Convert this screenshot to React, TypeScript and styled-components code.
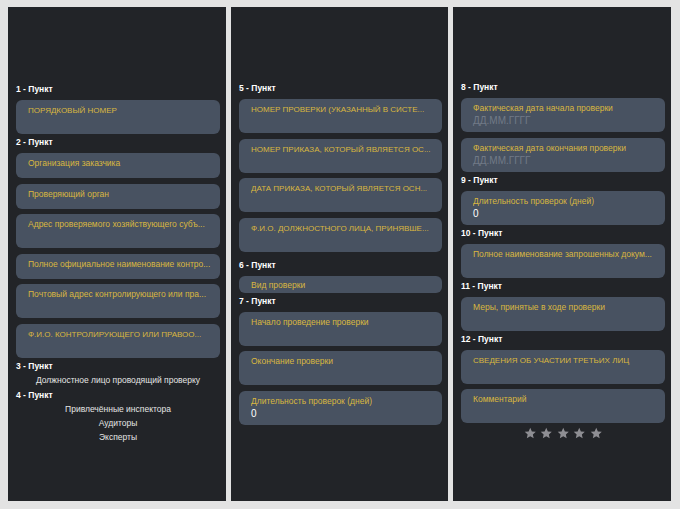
import React from "react";
import styled, { createGlobalStyle } from "styled-components";

const GlobalStyle = createGlobalStyle`
  html, body {
    margin: 0;
    padding: 0;
    background: #e3e3e3;
  }
  body {
    font-family: "Liberation Sans", Arial, sans-serif;
  }
`;

type FieldSize = "tall" | "short" | "compact";

type Block =
  | { kind: "fields"; title: string; spaced?: boolean; fields: FieldData[] }
  | { kind: "lines"; title: string; lines: string[] }
  | { kind: "stars" };

interface FieldData {
  label: string;
  size?: FieldSize;
  value?: string;
  placeholder?: string;
}

interface ScreenData {
  width: number;
  top: number;
  blocks: Block[];
}

const heights: Record<FieldSize, number> = {
  tall: 34,
  short: 25,
  compact: 17,
};

const Screens = styled.div`
  display: flex;
  gap: 5px;
  padding: 7px 9px 8px 8px;
  height: 509px;
  box-sizing: border-box;
`;

const Screen = styled.section<{ $width: number; $top: number }>`
  width: ${(p) => p.$width}px;
  height: 494px;
  flex: none;
  box-sizing: border-box;
  padding: ${(p) => p.$top}px 6px 0 8px;
  background: #222428;
  display: flex;
  flex-direction: column;
  overflow: hidden;
`;

const Heading = styled.div<{ $spaced?: boolean }>`
  margin-top: ${(p) => (p.$spaced ? 5 : 0)}px;
  padding-top: 1px;
  font-size: 8.5px;
  line-height: 14px;
  font-weight: 700;
  color: #ffffff;
`;

const FieldGroup = styled.div`
  display: flex;
  flex-direction: column;
  gap: 5.5px;
  padding-top: 4px;
`;

const Field = styled.div<{ $size: FieldSize }>`
  height: ${(p) => heights[p.$size]}px;
  box-sizing: border-box;
  padding: ${(p) => (p.$size === "compact" ? 3 : 4)}px 6px 0 12px;
  border-radius: 6px;
  background: #485261;
  overflow: hidden;
`;

// capitals run wider than lowercase in this face, so they get a smaller size
const FieldLabel = styled.div<{ $caps: boolean }>`
  font-size: ${(p) => (p.$caps ? 8 : 8.5)}px;
  line-height: 13px;
  color: #d9b740;
  white-space: nowrap;
  overflow: hidden;
`;

const FieldValue = styled.div<{ $muted?: boolean }>`
  font-size: 10px;
  line-height: 11px;
  color: ${(p) => (p.$muted ? "#717a87" : "#ffffff")};
`;

const Line = styled.div`
  font-size: 8.5px;
  line-height: 14px;
  color: #e4e4e4;
  text-align: center;
`;

const StarRow = styled.div`
  display: flex;
  justify-content: center;
  gap: 4px;
  padding-top: 4px;
`;

const StarIcon = () => (
  <svg width="12.5" height="12.5" viewBox="0 0 24 24">
    <polygon
      fill="#8e8e93"
      points="12,1.5 15.1,8.4 22.6,9.2 17,14.3 18.6,21.7 12,17.9 5.4,21.7 7,14.3 1.4,9.2 8.9,8.4"
    />
  </svg>
);

const screens: ScreenData[] = [
  {
    width: 218,
    top: 74,
    blocks: [
      {
        kind: "fields",
        title: "1 - Пункт",
        fields: [{ label: "ПОРЯДКОВЫЙ НОМЕР", size: "tall" }],
      },
      {
        kind: "fields",
        title: "2 - Пункт",
        fields: [
          { label: "Организация заказчика", size: "short" },
          { label: "Проверяющий орган", size: "short" },
          { label: "Адрес проверяемого хозяйствующего субъ...", size: "tall" },
          { label: "Полное официальное наименование контро...", size: "short" },
          { label: "Почтовый адрес контролирующего или пра...", size: "tall" },
          { label: "Ф.И.О. КОНТРОЛИРУЮЩЕГО ИЛИ ПРАВОО...", size: "tall" },
        ],
      },
      {
        kind: "lines",
        title: "3 - Пункт",
        lines: ["Должностное лицо проводящий проверку"],
      },
      {
        kind: "lines",
        title: "4 - Пункт",
        lines: ["Привлечённые инспектора", "Аудиторы", "Эксперты"],
      },
    ],
  },
  {
    width: 217,
    top: 73,
    blocks: [
      {
        kind: "fields",
        title: "5 - Пункт",
        fields: [
          { label: "НОМЕР ПРОВЕРКИ (УКАЗАННЫЙ В СИСТЕ...", size: "tall" },
          { label: "НОМЕР ПРИКАЗА, КОТОРЫЙ ЯВЛЯЕТСЯ ОС...", size: "tall" },
          { label: "ДАТА ПРИКАЗА, КОТОРЫЙ ЯВЛЯЕТСЯ ОСН...", size: "tall" },
          { label: "Ф.И.О. ДОЛЖНОСТНОГО ЛИЦА, ПРИНЯВШЕ...", size: "tall" },
        ],
      },
      {
        kind: "fields",
        title: "6 - Пункт",
        spaced: true,
        fields: [{ label: "Вид проверки", size: "compact" }],
      },
      {
        kind: "fields",
        title: "7 - Пункт",
        fields: [
          { label: "Начало проведение проверки", size: "tall" },
          { label: "Окончание проверки", size: "tall" },
          { label: "Длительность проверок (дней)", size: "tall", value: "0" },
        ],
      },
    ],
  },
  {
    width: 218,
    top: 72,
    blocks: [
      {
        kind: "fields",
        title: "8 - Пункт",
        fields: [
          { label: "Фактическая дата начала проверки", size: "tall", placeholder: "ДД.ММ.ГГГГ" },
          { label: "Фактическая дата окончания проверки", size: "tall", placeholder: "ДД.ММ.ГГГГ" },
        ],
      },
      {
        kind: "fields",
        title: "9 - Пункт",
        fields: [{ label: "Длительность проверок (дней)", size: "tall", value: "0" }],
      },
      {
        kind: "fields",
        title: "10 - Пункт",
        fields: [{ label: "Полное наименование запрошенных докум...", size: "tall" }],
      },
      {
        kind: "fields",
        title: "11 - Пункт",
        fields: [{ label: "Меры, принятые в ходе проверки", size: "tall" }],
      },
      {
        kind: "fields",
        title: "12 - Пункт",
        fields: [
          { label: "СВЕДЕНИЯ ОБ УЧАСТИИ ТРЕТЬИХ ЛИЦ", size: "tall" },
          { label: "Комментарий", size: "tall" },
        ],
      },
      { kind: "stars" },
    ],
  },
];

function renderBlock(block: Block, i: number) {
  if (block.kind === "stars") {
    return (
      <StarRow key={i}>
        {[0, 1, 2, 3, 4].map((n) => (
          <StarIcon key={n} />
        ))}
      </StarRow>
    );
  }
  if (block.kind === "lines") {
    return (
      <div key={i}>
        <Heading>{block.title}</Heading>
        {block.lines.map((line) => (
          <Line key={line}>{line}</Line>
        ))}
      </div>
    );
  }
  return (
    <div key={i}>
      <Heading $spaced={block.spaced}>{block.title}</Heading>
      <FieldGroup>
        {block.fields.map((field) => (
          <Field key={field.label} $size={field.size ?? "tall"}>
            <FieldLabel $caps={field.label === field.label.toUpperCase()}>
              {field.label}
            </FieldLabel>
            {field.value && <FieldValue>{field.value}</FieldValue>}
            {field.placeholder && <FieldValue $muted>{field.placeholder}</FieldValue>}
          </Field>
        ))}
      </FieldGroup>
    </div>
  );
}

export default function App() {
  return (
    <>
      <GlobalStyle />
      <Screens>
        {screens.map((screen, i) => (
          <Screen key={i} $width={screen.width} $top={screen.top}>
            {screen.blocks.map(renderBlock)}
          </Screen>
        ))}
      </Screens>
    </>
  );
}
